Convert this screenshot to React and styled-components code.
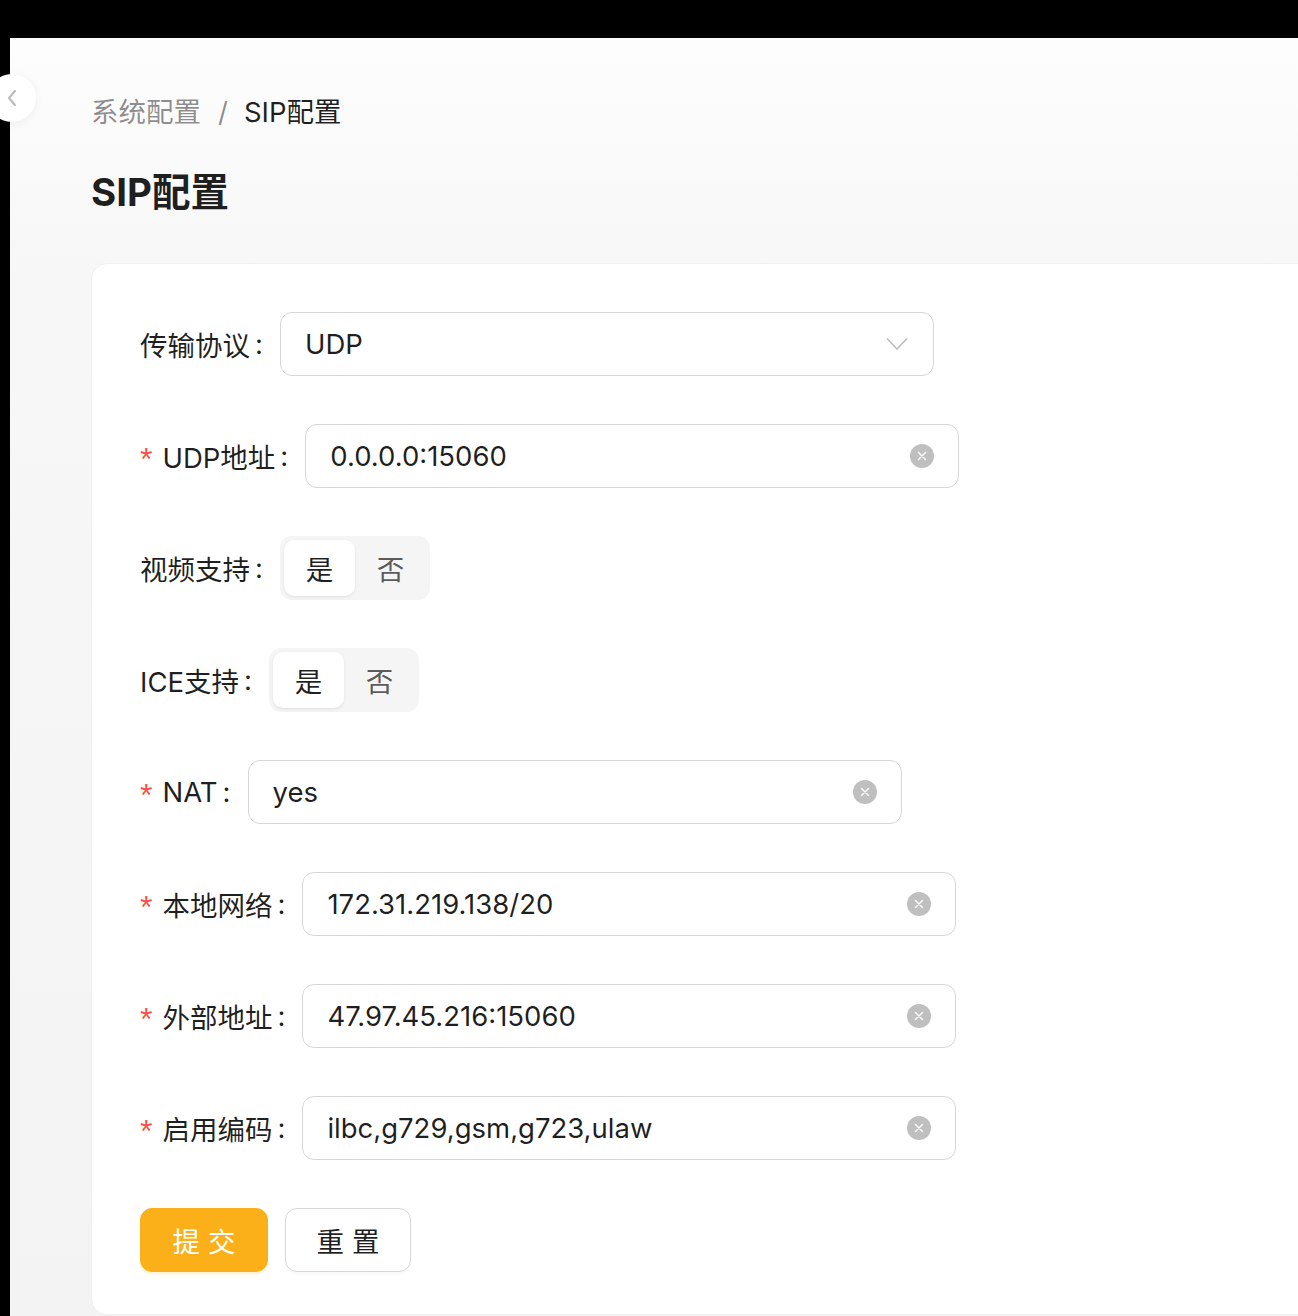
import React from 'react';
import styled, { createGlobalStyle } from 'styled-components';

const GlobalStyle = createGlobalStyle`
  html, body {
    margin: 0;
    padding: 0;
    background: #000;
  }
  body {
    font-family: Inter, "Noto Sans CJK SC", sans-serif;
    color: rgba(0, 0, 0, 0.88);
  }
  * {
    box-sizing: border-box;
  }
`;

const Page = styled.div`
  height: 1316px;
  display: flex;
  flex-direction: column;
  overflow: hidden;
`;

const TopBar = styled.div`
  height: 38px;
  flex: none;
  background: #000;
`;

const Body = styled.div`
  flex: 1;
  display: flex;
  position: relative;
`;

const Strip = styled.div`
  width: 10px;
  flex: none;
  background: #000;
`;

const Main = styled.main`
  flex: 1;
  padding: 56px 0 0 81px;
  background: linear-gradient(#fdfdfd 0%, #f7f7f7 18%, #f3f3f3 100%);
  overflow: hidden;
`;

const CollapseButton = styled.button`
  position: absolute;
  left: -12px;
  top: 36px;
  width: 48px;
  height: 48px;
  border-radius: 50%;
  border: none;
  background: #fff;
  box-shadow: 0 2px 8px rgba(0, 0, 0, 0.06);
  display: flex;
  align-items: center;
  justify-content: center;
  padding: 0 0 0 22px;
  cursor: pointer;
`;

const Breadcrumb = styled.nav`
  display: flex;
  align-items: center;
  font-size: 27.5px;
  line-height: 36px;
  height: 36px;
`;

const Crumb = styled.span`
  color: ${(p) => (p.$current ? 'rgba(0, 0, 0, 0.88)' : 'rgba(0, 0, 0, 0.45)')};
`;

const Sep = styled.span`
  color: rgba(0, 0, 0, 0.45);
  margin: 0 16px 0 17px;
`;

const Title = styled.h1`
  margin: 38px 0 0;
  font-size: 38.5px;
  line-height: 48px;
  font-weight: 700;
  color: rgba(0, 0, 0, 0.88);
`;

const Card = styled.section`
  margin: 47px -40px 0 0;
  background: #fff;
  border: 1px solid #f0f0f0;
  border-radius: 16px;
  padding: 48px 48px 42px;
`;

const Row = styled.div`
  display: flex;
  align-items: center;
  height: 64px;
  margin-bottom: 48px;
`;

const Label = styled.label`
  display: flex;
  align-items: center;
  font-size: 27.5px;
  white-space: nowrap;
  color: rgba(0, 0, 0, 0.88);

  &::after {
    content: ':';
    margin: 0 17px 0 5px;
  }
`;

const Star = styled.span`
  color: #ff4d4f;
  font-family: "Liberation Sans", sans-serif;
  font-size: 32px;
  margin-right: 10px;
  line-height: 1;
  position: relative;
  top: 3px;
`;

const Field = styled.div`
  width: 654px;
  height: 64px;
  border: 1px solid #d6d6d6;
  border-radius: 12px;
  background: #fff;
  display: flex;
  align-items: center;
  padding: 0 24px;
  font-size: 27.5px;
  color: rgba(0, 0, 0, 0.88);
`;

const Value = styled.span`
  flex: 1;
`;

const ClearIcon = styled.span`
  width: 24px;
  height: 24px;
  border-radius: 50%;
  background: rgba(0, 0, 0, 0.25);
  display: flex;
  align-items: center;
  justify-content: center;
`;

const Segmented = styled.div`
  display: flex;
  padding: 4px;
  background: #f5f5f5;
  border-radius: 12px;
  height: 64px;
`;

const SegItem = styled.div`
  width: 71px;
  height: 56px;
  border-radius: 10px;
  display: flex;
  align-items: center;
  justify-content: center;
  font-size: 27.5px;
  color: ${(p) => (p.$active ? 'rgba(0, 0, 0, 0.88)' : 'rgba(0, 0, 0, 0.65)')};
  background: ${(p) => (p.$active ? '#fff' : 'transparent')};
  box-shadow: ${(p) =>
    p.$active
      ? '0 1px 2px rgba(0,0,0,0.04), 0 1px 6px -1px rgba(0,0,0,0.03), 0 2px 4px rgba(0,0,0,0.03)'
      : 'none'};
`;

const Actions = styled.div`
  display: flex;
  gap: 17px;
`;

const Button = styled.button`
  height: 64px;
  width: ${(p) => (p.$primary ? '128px' : '126px')};
  border-radius: 12px;
  font-family: Inter, "Noto Sans CJK SC", sans-serif;
  font-size: 27.5px;
  letter-spacing: 0.3em;
  text-indent: 0.3em;
  cursor: pointer;
  border: 1px solid ${(p) => (p.$primary ? '#fbaf18' : '#d6d6d6')};
  background: ${(p) => (p.$primary ? '#fbaf18' : '#fff')};
  color: ${(p) => (p.$primary ? '#fff' : 'rgba(0, 0, 0, 0.88)')};
  box-shadow: ${(p) =>
    p.$primary ? '0 3px 0 rgba(255, 200, 5, 0.12)' : '0 3px 0 rgba(0, 0, 0, 0.02)'};
`;

const Clear = () => (
  <ClearIcon>
    <svg width="10" height="10" viewBox="0 0 10 10">
      <path d="M1.5 1.5 L8.5 8.5 M8.5 1.5 L1.5 8.5" stroke="#fff" strokeWidth="1.4" strokeLinecap="round" />
    </svg>
  </ClearIcon>
);

const TextField = ({ label, value, required }) => (
  <Row>
    <Label>
      {required && <Star>*</Star>}
      {label}
    </Label>
    <Field>
      <Value>{value}</Value>
      <Clear />
    </Field>
  </Row>
);

const Switch = ({ label, value }) => (
  <Row>
    <Label>{label}</Label>
    <Segmented>
      <SegItem $active={value}>是</SegItem>
      <SegItem $active={!value}>否</SegItem>
    </Segmented>
  </Row>
);

export default function App() {
  return (
    <Page>
      <GlobalStyle />
      <TopBar />
      <Body>
        <Strip />
        <CollapseButton aria-label="collapse">
          <svg width="10" height="18" viewBox="0 0 10 18" style={{ marginLeft: -22 }}>
            <path d="M8 2 L2 9 L8 16" fill="none" stroke="#bdbdbd" strokeWidth="2.2" strokeLinecap="round" strokeLinejoin="round" />
          </svg>
        </CollapseButton>
        <Main>
          <Breadcrumb>
            <Crumb>系统配置</Crumb>
            <Sep>/</Sep>
            <Crumb $current>SIP配置</Crumb>
          </Breadcrumb>
          <Title>SIP配置</Title>
          <Card>
            <Row>
              <Label>传输协议</Label>
              <Field>
                <Value>UDP</Value>
                <svg width="22" height="14" viewBox="0 0 22 14" style={{ marginRight: 1 }}>
                  <path d="M1.5 2 L11 12 L20.5 2" fill="none" stroke="#bfbfbf" strokeWidth="1.8" strokeLinecap="round" strokeLinejoin="round" />
                </svg>
              </Field>
            </Row>
            <TextField required label="UDP地址" value="0.0.0.0:15060" />
            <Switch label="视频支持" value />
            <Switch label="ICE支持" value />
            <TextField required label="NAT" value="yes" />
            <TextField required label="本地网络" value="172.31.219.138/20" />
            <TextField required label="外部地址" value="47.97.45.216:15060" />
            <TextField required label="启用编码" value="ilbc,g729,gsm,g723,ulaw" />
            <Actions>
              <Button $primary>提交</Button>
              <Button>重置</Button>
            </Actions>
          </Card>
        </Main>
      </Body>
    </Page>
  );
}
